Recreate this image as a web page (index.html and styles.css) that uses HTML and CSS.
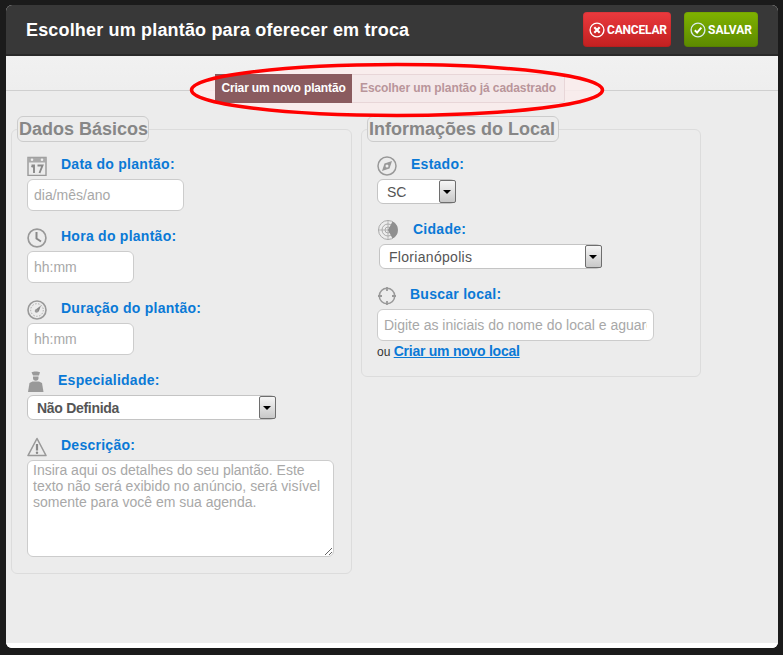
FILE: index.html
```html
<!DOCTYPE html>
<html lang="pt-BR">
<head>
<meta charset="utf-8">
<title>Escolher um plantão</title>
<link rel="stylesheet" href="styles.css">
</head>
<body>
<div class="modal">
  <header class="modal-head">
    <h1>Escolher um plantão para oferecer em troca</h1>
    <div class="actions">
      <button class="btn btn-cancel" type="button">
        <svg class="btn-icon" viewBox="0 0 16 16"><circle cx="8" cy="8" r="6.9" fill="none" stroke="#fff" stroke-width="1.4"/><path d="M5.3 5.3l5.4 5.4M10.7 5.3l-5.4 5.4" stroke="#fff" stroke-width="2.2" fill="none"/></svg>CANCELAR
      </button>
      <button class="btn btn-save" type="button">
        <svg class="btn-icon" viewBox="0 0 16 16"><circle cx="8" cy="8" r="6.9" fill="none" stroke="#d8ecec" stroke-width="1.4"/><path d="M4.8 8.2l2.3 2.4 4.2-5" stroke="#fff" stroke-width="2" fill="none"/></svg>SALVAR
      </button>
    </div>
  </header>
  <div class="modal-body">
    <nav class="tabs">
      <span class="tab tab-on">Criar um novo plantão</span>
      <span class="tab tab-off">Escolher um plantão já cadastrado</span>
    </nav>
    <svg class="marker" viewBox="0 0 416 56"><ellipse cx="208" cy="28" rx="205.5" ry="25.5" fill="none" stroke="#f00" stroke-width="3.5"/></svg>
    <div class="columns">
      <fieldset class="group group-basic">
        <legend>Dados Básicos</legend>
        <div class="field">
          <div class="field-head">
            <svg class="ico" viewBox="0 0 20 20"><path d="M1 1.500h18v18H1z" fill="none" stroke="#999" stroke-width="1.400"/><path d="M1 1.500h18v5H1z" fill="#aaa"/><circle cx="5" cy="3.800" r="1.300" fill="#eee"/><circle cx="15" cy="3.800" r="1.300" fill="#eee"/><path d="M4.500 9.500h2.500v7.500M4.500 11l1.500-1M10.500 9.500h5l-3 7.500" fill="none" stroke="#8a8a8a" stroke-width="1.900"/></svg>
            <label>Data do plantão:</label>
          </div>
          <input class="txt txt-date" type="text" placeholder="dia/mês/ano">
        </div>
        <div class="field">
          <div class="field-head">
            <svg class="ico" viewBox="0 0 20 20"><circle cx="10" cy="10" r="8.900" fill="none" stroke="#999" stroke-width="1.700"/><path d="M9.500 4v6.500l4.500 3" fill="none" stroke="#888" stroke-width="2"/></svg>
            <label>Hora do plantão:</label>
          </div>
          <input class="txt txt-time" type="text" placeholder="hh:mm">
        </div>
        <div class="field">
          <div class="field-head">
            <svg class="ico" viewBox="0 0 20 20"><circle cx="10" cy="10" r="9" fill="none" stroke="#999" stroke-width="1.600"/><circle cx="10" cy="10" r="6.300" fill="none" stroke="#aaa" stroke-width="1" stroke-dasharray="1.500 1.500"/><path d="M14 5.500l-2.300 6.200-3.300-1.900z" fill="#888"/><circle cx="9.500" cy="11" r="1.800" fill="#999"/></svg>
            <label>Duração do plantão:</label>
          </div>
          <input class="txt txt-time" type="text" placeholder="hh:mm">
        </div>
        <div class="field field-spec">
          <div class="field-head head-tight">
            <svg class="ico ico-nurse" viewBox="0 0 20 21"><path d="M3.500 1.200c2-1 6.500-1 8.500 0l-1 3.300H5z" fill="#999"/><path d="M5 5.500h5.500v1.500a2.750 2.750 0 0 1-5.500 0z" fill="#999"/><path d="M4.500 10.500h6.500l3 1.500 1.500 9H0l1.500-9z" fill="#999"/></svg>
            <label>Especialidade:</label>
          </div>
          <div class="sel sel-spec"><select><option>Não Definida</option></select><span class="sel-btn"></span></div>
        </div>
        <div class="field">
          <div class="field-head">
            <svg class="ico" viewBox="0 0 20 20"><path d="M10 1.500L19 18.500H1z" fill="none" stroke="#999" stroke-width="1.600" stroke-linejoin="round"/><path d="M10 7v6.500" stroke="#888" stroke-width="2.200"/><circle cx="10" cy="15.800" r="1.200" fill="#888"/></svg>
            <label>Descrição:</label>
          </div>
          <textarea class="txt area" placeholder="Insira aqui os detalhes do seu plantão. Este texto não será exibido no anúncio, será visível somente para você em sua agenda."></textarea>
        </div>
      </fieldset>
      <fieldset class="group group-local">
        <legend>Informações do Local</legend>
        <div class="field">
          <div class="field-head">
            <svg class="ico" viewBox="0 0 20 20"><circle cx="10" cy="10" r="9" fill="none" stroke="#999" stroke-width="1.500"/><path d="M15 5l-2.500 7.500L5 15l2.500-7.500z" fill="#999"/><circle cx="10" cy="10" r="1.500" fill="#eee"/></svg>
            <label>Estado:</label>
          </div>
          <div class="sel sel-uf"><select><option>SC</option></select><span class="sel-btn"></span></div>
        </div>
        <div class="field field-city">
          <div class="field-head head-wide">
            <svg class="ico" viewBox="0 0 20 20"><circle cx="10" cy="10" r="9.500" fill="none" stroke="#aaa"/><circle cx="10" cy="10" r="6" fill="none" stroke="#aaa"/><circle cx="10" cy="10" r="3" fill="none" stroke="#aaa"/><path d="M0 10h20M10 0v20" stroke="#aaa" stroke-width=".8"/><path d="M10 10l4.500-8.500a9.500 9.500 0 0 1 0 17z" fill="#8f8f8f"/></svg>
            <label>Cidade:</label>
          </div>
          <div class="sel sel-city"><select><option>Florianópolis</option></select><span class="sel-btn"></span></div>
        </div>
        <div class="field field-search">
          <div class="field-head">
            <svg class="ico ico-small" viewBox="0 0 18 18"><circle cx="9" cy="9" r="7.700" fill="none" stroke="#999" stroke-width="1.500"/><path d="M9 0v4M9 14v4M0 9h4M14 9h4" stroke="#999" stroke-width="1.800"/></svg>
            <label>Buscar local:</label>
          </div>
          <input class="txt txt-local" type="text" placeholder="Digite as iniciais do nome do local e aguarde">
          <p class="alt">ou <a href="#">Criar um novo local</a></p>
        </div>
      </fieldset>
    </div>
  </div>
  <div class="modal-foot"></div>
</div>
</body>
</html>
```
FILE: styles.css
```css
* { box-sizing: border-box; }
html, body { height: 100%; }
body {
  margin: 0;
  padding: 5px 5px 7px 6px;
  background: #1b1b1b;
  font-family: "Liberation Sans", Arial, sans-serif;
  overflow: hidden;
}
.modal {
  display: flex;
  flex-direction: column;
  height: 643px;
  border-radius: 6px;
  overflow: hidden;
  background: #fff;
}
.modal-head {
  flex: none;
  height: 51px;
  padding: 0 20px;
  display: flex;
  justify-content: space-between;
  align-items: flex-start;
  background: #383838;
  border-bottom: 2px solid #2a2a2a;
}
.modal-head h1 {
  margin: 14px 0 0;
  font-size: 18px;
  line-height: 22px;
  font-weight: bold;
  color: #fff;
  letter-spacing: .17px;
}
.actions { display: flex; gap: 13px; margin-top: 7px; }
.btn {
  display: flex;
  align-items: center;
  height: 35px;
  padding: 0 4px 0 6px;
  border: 0;
  border-radius: 4px;
  color: #fff;
  font-family: Roboto, sans-serif;
  font-weight: bold;
  font-size: 12px;
  box-shadow: inset 0 0 0 1px rgba(0,0,0,.06);
}
.btn-cancel { width: 88px; background: linear-gradient(#ea3a3e, #c22020); letter-spacing: -.2px; }
.btn-save { width: 74px; background: linear-gradient(#7fb200, #5c8a00); }
.btn-icon { width: 16px; height: 16px; margin-right: 2px; flex: none; }
.modal-body {
  position: relative;
  flex: 1;
  min-height: 0;
  background: #ececec;
}
.tabs {
  position: relative;
  display: flex;
  justify-content: center;
  padding: 18px 4px 0 0;
  height: 49px;
  background: linear-gradient(#f1f1f1 0, #eeeeee 34px, #cfcfcf 34px, #cfcfcf 35px, #ececec 35px);
}
.tabs::before {
  content: "";
  position: absolute;
  left: 184px;
  top: 7px;
  width: 414px;
  height: 54px;
  border-radius: 50%;
  background: rgba(250, 236, 236, .85);
}
.tab {
  position: relative;
  height: 29px;
  font-size: 12px;
  line-height: 29px;
  font-weight: bold;
  white-space: nowrap;
}
.tab-on { width: 137px; text-align: center; background: #8a5b5f; color: #fff; letter-spacing: -.15px; }
.tab-off { width: 213px; text-align: center; background: #f4e9ea; color: #b9959a; border: 1px solid #e8d6d8; border-left: 0; line-height: 27px; border-radius: 0 3px 3px 0; letter-spacing: -.08px; }
.marker {
  position: absolute;
  left: 183px;
  top: 6px;
  width: 416px;
  height: 56px;
}
.columns {
  display: flex;
  align-items: flex-start;
  gap: 9px;
  padding: 11px 0 0 5px;
}
.group {
  margin: 0;
  padding: 0 0 0 15px;
  border: 1px solid #dcdcdc;
  border-radius: 6px;
  min-width: 0;
  width: 341px;
}
.group-basic { height: 458px; }
.group-local { width: 340px; height: 261px; }
.group legend {
  margin: 0 0 -2px -10px;
  padding: 0 1px;
  height: 26px;
  font-size: 18px;
  line-height: 24px;
  font-weight: bold;
  color: #878787;
  border: 1px solid #ccc;
  border-radius: 6px;
  white-space: nowrap;
}
.group-basic legend { width: 132px; }
.group-local legend { width: 192px; }
.field { margin-top: 17px; }
.group .field:first-of-type { margin-top: 16px; }
.field-head {
  display: flex;
  align-items: flex-start;
  gap: 14px;
  height: 23px;
}
.head-tight { gap: 11px; }
.head-wide { gap: 15px; padding-left: 1px; }
.field-head label {
  font-size: 14px;
  line-height: 16px;
  font-weight: bold;
  color: #0a79d6;
  letter-spacing: .26px;
}
.head-tight label, .head-wide label { margin-top: 1px; }
.field-search label { margin-top: -1px; }
.ico { width: 20px; height: 20px; flex: none; }
.ico-nurse { height: 21px; margin-left: 1px; margin-right: -1px; }
.ico-small { width: 18px; height: 18px; margin-left: 1px; }
.txt {
  display: block;
  border: 1px solid #ccc;
  border-radius: 6px;
  background: #fff;
  font-family: "Liberation Sans", Arial, sans-serif;
  font-size: 14px;
  padding: 0 6px;
  outline: 0;
}
.txt::placeholder { color: #a8a8a8; opacity: 1; }
.txt-date { width: 157px; height: 32px; }
.txt-time { width: 107px; height: 32px; }
.txt-local { width: 277px; height: 32px; }
.area {
  width: 307px;
  height: 97px;
  padding: 1px 5px;
  line-height: 16px;
  resize: vertical;
}
.sel {
  position: relative;
  height: 25px;
  border: 1px solid #c4c4c4;
  border-radius: 6px;
  background: #fff;
}
.sel select {
  display: block;
  width: 100%;
  height: 23px;
  border: 0;
  padding: 0 0 0 9px;
  appearance: none;
  background: transparent;
  font-family: "Liberation Sans", Arial, sans-serif;
  font-size: 14px;
  color: #555;
  outline: 0;
}
.sel-spec { width: 249px; }
.sel-spec select { font-weight: bold; letter-spacing: -.3px; }
.sel-uf { width: 79px; }
.sel-city { width: 223px; margin-left: 2px; }
.sel-city select { letter-spacing: .3px; }
.sel-btn {
  position: absolute;
  top: 0;
  right: -1px;
  width: 17px;
  height: 23px;
  border: 1px solid #6e6e6e;
  border-radius: 2px;
  background: linear-gradient(#f6f6f6, #c8c8c8);
}
.sel-btn::after {
  content: "";
  position: absolute;
  left: 3px;
  top: 9px;
  border: 4px solid transparent;
  border-top: 4px solid #000;
  border-bottom: 0;
}
.field-city { margin-top: 16px; }
.field-city .field-head { height: 24px; }
.field-spec .field-head { height: 24px; }
.field-search { margin-top: 18px; }
.field-search .field-head { height: 22px; }
.field-spec { margin-top: 16px; }
.alt {
  margin: 2px 0 0;
  font-size: 12px;
  line-height: 16px;
  color: #333;
}
.alt a { font-size: 14px; font-weight: bold; color: #0a79d6; letter-spacing: -.25px; }
.modal-foot { flex: none; height: 5px; background: #fff; }
```
